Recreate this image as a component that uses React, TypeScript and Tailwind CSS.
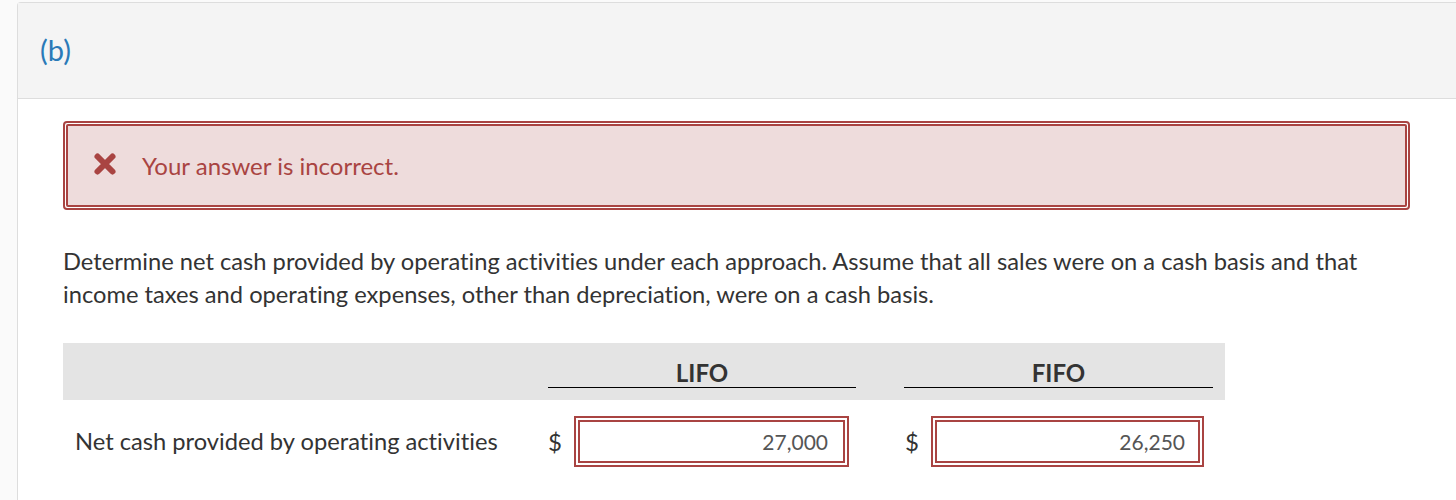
import React from "react";

export default function App() {
  return (
    <div
      className="flex w-[1456px] h-[500px] bg-[#fafafa] overflow-hidden [font-variant-ligatures:none]"
      style={{ fontFamily: "Lato, 'Liberation Sans', sans-serif" }}
    >
      <div className="w-[17px] shrink-0" />
      <div className="flex-1 mt-[2px] border-l border-t border-[#dddddd] rounded-tl-[4px] bg-white flex flex-col">
        <div className="h-[96px] bg-[#f4f4f4] border-b border-[#dddddd] pl-[22px] flex items-center shrink-0">
          <span className="text-[29px] text-[#2a7ab8] leading-none -mt-[2px]">(b)</span>
        </div>
        <div className="pl-[45px] pr-[45px] pt-[22px]">
          <div className="border-2 border-[#a94442] rounded-[4px] p-[1px] bg-white w-[1347px]">
            <div className="border-2 border-[#a94442] rounded-[2px] bg-[#eedcdc] h-[83px] flex items-center pl-[25px]">
              <svg width="24" height="24" viewBox="0 0 24 24" className="mr-[25px] -mt-[4px]">
                <path d="M4.5 4.5 L19.5 19.5 M19.5 4.5 L4.5 19.5" stroke="#a94442" strokeWidth="6" strokeLinecap="round" />
              </svg>
              <span className="text-[24px] text-[#a94442] leading-none">Your answer is incorrect.</span>
            </div>
          </div>
          <p className="mt-[35px] text-[23.7px] leading-[33px] text-[#333333] w-[1320px]">
            Determine net cash provided by operating activities under each approach. Assume that all sales were on a cash basis and that income taxes and operating expenses, other than depreciation, were on a cash basis.
          </p>
          <div className="mt-[32px] w-[1162px]">
            <div className="h-[57px] bg-[#e4e4e4] flex items-end pb-[12px]">
              <div className="w-[485px]" />
              <div className="w-[308px] border-b border-black text-center text-[24px] font-bold text-[#333333] leading-[26px] pb-[1px]">LIFO</div>
              <div className="w-[48px]" />
              <div className="w-[309px] border-b border-black text-center text-[24px] font-bold text-[#333333] leading-[26px] pb-[1px]">FIFO</div>
            </div>
            <div className="flex items-center h-[83px]">
              <div className="w-[485px] pl-[12px] text-[23.7px] text-[#333333] leading-none">Net cash provided by operating activities</div>
              <div className="w-[308px] flex items-center">
                <span className="w-[26px] text-[24px] text-[#333333] leading-none">$</span>
                <div className="border-2 border-[#a94442] p-[2px] bg-white w-[275px]">
                  <div className="border-2 border-[#a94442] h-[43px] flex items-center justify-end pr-[15px] text-[21px] text-[#555555]">27,000</div>
                </div>
              </div>
              <div className="w-[48px]" />
              <div className="w-[309px] flex items-center">
                <span className="w-[27px] pl-[1px] text-[24px] text-[#333333] leading-none">$</span>
                <div className="border-2 border-[#a94442] p-[2px] bg-white w-[273px]">
                  <div className="border-2 border-[#a94442] h-[43px] flex items-center justify-end pr-[13px] text-[21px] text-[#555555]">26,250</div>
                </div>
              </div>
            </div>
          </div>
        </div>
      </div>
    </div>
  );
}
